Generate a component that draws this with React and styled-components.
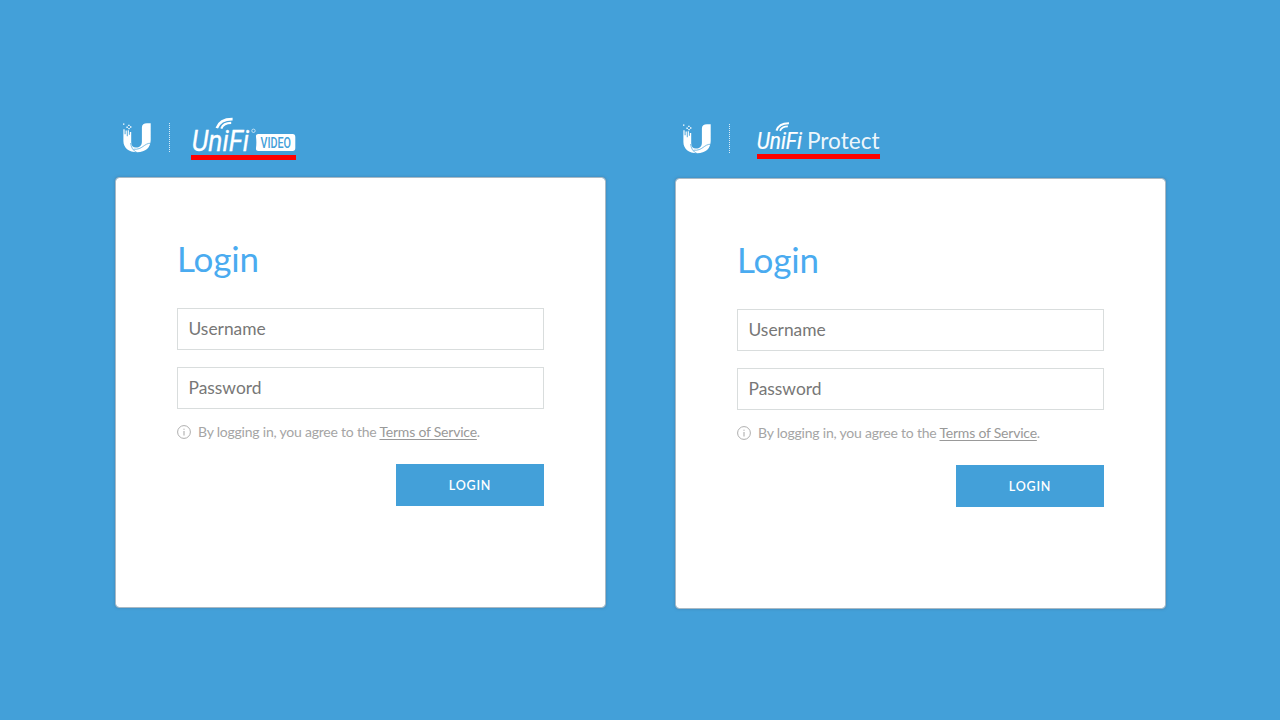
import React from "react";
import styled, { createGlobalStyle } from "styled-components";

const GlobalStyle = createGlobalStyle`
  * { box-sizing: border-box; }
  body { margin: 0; background: #43a0d9; font-family: Lato, sans-serif; }
`;

const Page = styled.main`
  display: flex;
  align-items: flex-start;
  gap: 69px;
  width: 1280px;
  height: 720px;
  padding: 112px 115px 0;
  overflow: hidden;
  background: #43a0d9;
`;

const Panel = styled.section`
  width: 491px;
  padding-top: ${(p) => p.$drop}px;
`;

const Header = styled.header`
  display: flex;
  align-items: flex-start;
  height: 65px;
  padding-left: 7px;
`;

const UbntMark = styled.svg`
  display: block;
  width: 30px;
  height: 32px;
  margin-top: 10px;
`;

const Divider = styled.svg`
  display: block;
  width: 2px;
  height: 31px;
  margin: 10px 0 0 17px;
`;

const Product = styled.div`
  display: flex;
  flex-direction: column;
  margin-left: ${(p) => p.$indent}px;
  padding-top: 5px;
`;

const Wordmark = styled.svg`
  display: block;
  overflow: visible;
  font-family: Roboto, sans-serif;
`;

const RedLine = styled.div`
  height: 5px;
  background: #fe0000;
`;

const Card = styled.form`
  display: flex;
  flex-direction: column;
  height: 431px;
  padding: 59px 61px 0;
  border: 1px solid #a9b9c4;
  border-radius: 4px;
  background: #fff;
  background-clip: padding-box;
  box-shadow: 0 0 3px rgba(70, 90, 120, 0.4);
`;

const Title = styled.h1`
  height: 42px;
  margin: 0 0 29px;
  font-size: 35px;
  font-weight: 400;
  line-height: 42px;
  letter-spacing: -0.15px;
  color: #4aabf0;
`;

const Field = styled.input`
  display: block;
  width: 367px;
  height: 42px;
  flex: none;
  margin: 0 0 17px;
  padding: 0 10.5px 1px;
  border: 1px solid #d9dddd;
  border-radius: 0;
  outline: 0;
  background: #fff;
  font: 400 17.4px Lato, sans-serif;
  &::placeholder { color: #777; opacity: 1; }
`;

const Terms = styled.p`
  display: flex;
  align-items: center;
  height: 16px;
  margin: -2px 0 24px;
  font-size: 14px;
  line-height: 16px;
  letter-spacing: -0.215px;
  white-space: pre;
  color: #a5a5a5;
`;

const InfoIcon = styled.svg`
  width: 14px;
  height: 14px;
  margin-right: 7px;
`;

const TermsLink = styled.a`
  color: #999;
  text-decoration: underline;
  text-underline-offset: 2px;
  text-decoration-thickness: 1px;
`;

const SubmitButton = styled.button`
  align-self: flex-end;
  width: 148px;
  height: 42px;
  padding: 0;
  border: 0;
  background: #43a0d9;
  color: #fff;
  font: 600 12.5px Lato, sans-serif;
  letter-spacing: 0.8px;
`;

function BrandMark() {
  return (
    <UbntMark viewBox="0 0 30 32">
      <path
        fill="#fff"
        d="M1.4 7.3h1.2v5h1V8.6h1.2v5.6h.9V8.2h1.2v4.6h.9V10h1.4v10c0 3.8 1.6 5.6 4.8 5.6 3.6 0 5.9-2.2 5.9-6.2V5.4c0-2.8 2-4.2 5-4.2h3.8V18c0 7.6-5.2 12.2-13.4 12.2C6.6 30.2 1.4 25.8 1.4 19z"
      />
      <g fill="none" stroke="#43a0d9" strokeWidth=".7">
        <path d="M29 21.2c-7.2-.2-8.2 6.9-17.5 6" />
        <path d="M8.6 21c.5 4.4 2.4 7.8 6.4 9.6" />
      </g>
      <path fill="#fff" d="M1 1.4h1.4v1.4H1zM6.2 2.7h1.4v1.4H6.2zM8 4.3h1.4v1.4H8zM4.4 4.5h1.4v1.4H4.4zM6.3 5.9h1.4v1.4H6.3z" />
    </UbntMark>
  );
}

function DottedDivider() {
  return (
    <Divider viewBox="0 0 2 31">
      <path d="M.5 1v30" stroke="#fff" strokeOpacity=".8" strokeWidth="1" strokeDasharray="1 1" />
    </Divider>
  );
}

function UniFi() {
  return (
    <>
      <text x=".8" y="33.7" fontSize="29.5" fontStyle="italic" fontWeight="400" fill="#fff" stroke="#fff" strokeWidth=".3" textLength="57.2" lengthAdjust="spacingAndGlyphs">
        UniFi
      </text>
      <g fill="none" stroke="#fff">
        <path d="M25.8 11.2C28 4.6 33 2 41.6 2.1" strokeWidth="2.6" />
        <path d="M30.3 11.6c1.5-4 4.5-5.7 9.9-5.7" strokeWidth="2.1" />
      </g>
    </>
  );
}

function VideoLogo() {
  return (
    <Wordmark width="105" height="38" viewBox="0 0 105 38">
      <UniFi />
      <circle cx="62.5" cy="13.8" r="1.7" fill="none" stroke="#fff" strokeWidth=".8" opacity=".8" />
      <path fill="#fff" d="M67.5 17h34c2 0 2.8 1 2.8 3v11c0 2-.8 3-2.8 3h-34c-2 0-2.8-1-2.5-3 .5-4 .5-7 0-11-.3-2 .5-3 2.5-3z" />
      <text x="69.6" y="30.6" fontSize="14" fontWeight="500" fill="#43a0d9" textLength="30.4" lengthAdjust="spacingAndGlyphs">
        VIDEO
      </text>
    </Wordmark>
  );
}

function ProtectLogo() {
  return (
    <Wordmark width="123" height="36" viewBox="0 0 123 36">
      <g transform="translate(-.9 3.6) scale(.79 .8)">
        <UniFi />
      </g>
      <text x="50" y="30.7" fontFamily="Lato" fontSize="22.6" fill="#fff" fillOpacity=".93" textLength="72.5" lengthAdjust="spacingAndGlyphs">
        Protect
      </text>
    </Wordmark>
  );
}

function LoginPanel({ drop, indent, logo }) {
  return (
    <Panel $drop={drop}>
      <Header>
        <BrandMark />
        <DottedDivider />
        <Product $indent={indent}>
          {logo}
          <RedLine />
        </Product>
      </Header>
      <Card onSubmit={(e) => e.preventDefault()}>
        <Title>Login</Title>
        <Field placeholder="Username" />
        <Field type="password" placeholder="Password" />
        <Terms>
          <InfoIcon viewBox="0 0 14 14" fill="none" stroke="#a5a5a5">
            <circle cx="7" cy="7" r="6.4" strokeWidth=".9" />
            <path d="M7 6v4.5M7 3.7v1.1" />
          </InfoIcon>
          <span>By logging in, you agree to the <TermsLink>Terms of Service</TermsLink>.</span>
        </Terms>
        <SubmitButton>LOGIN</SubmitButton>
      </Card>
    </Panel>
  );
}

export default function App() {
  return (
    <>
      <GlobalStyle />
      <Page>
        <LoginPanel drop={0} indent={20} logo={<VideoLogo />} />
        <LoginPanel drop={1} indent={26} logo={<ProtectLogo />} />
      </Page>
    </>
  );
}
